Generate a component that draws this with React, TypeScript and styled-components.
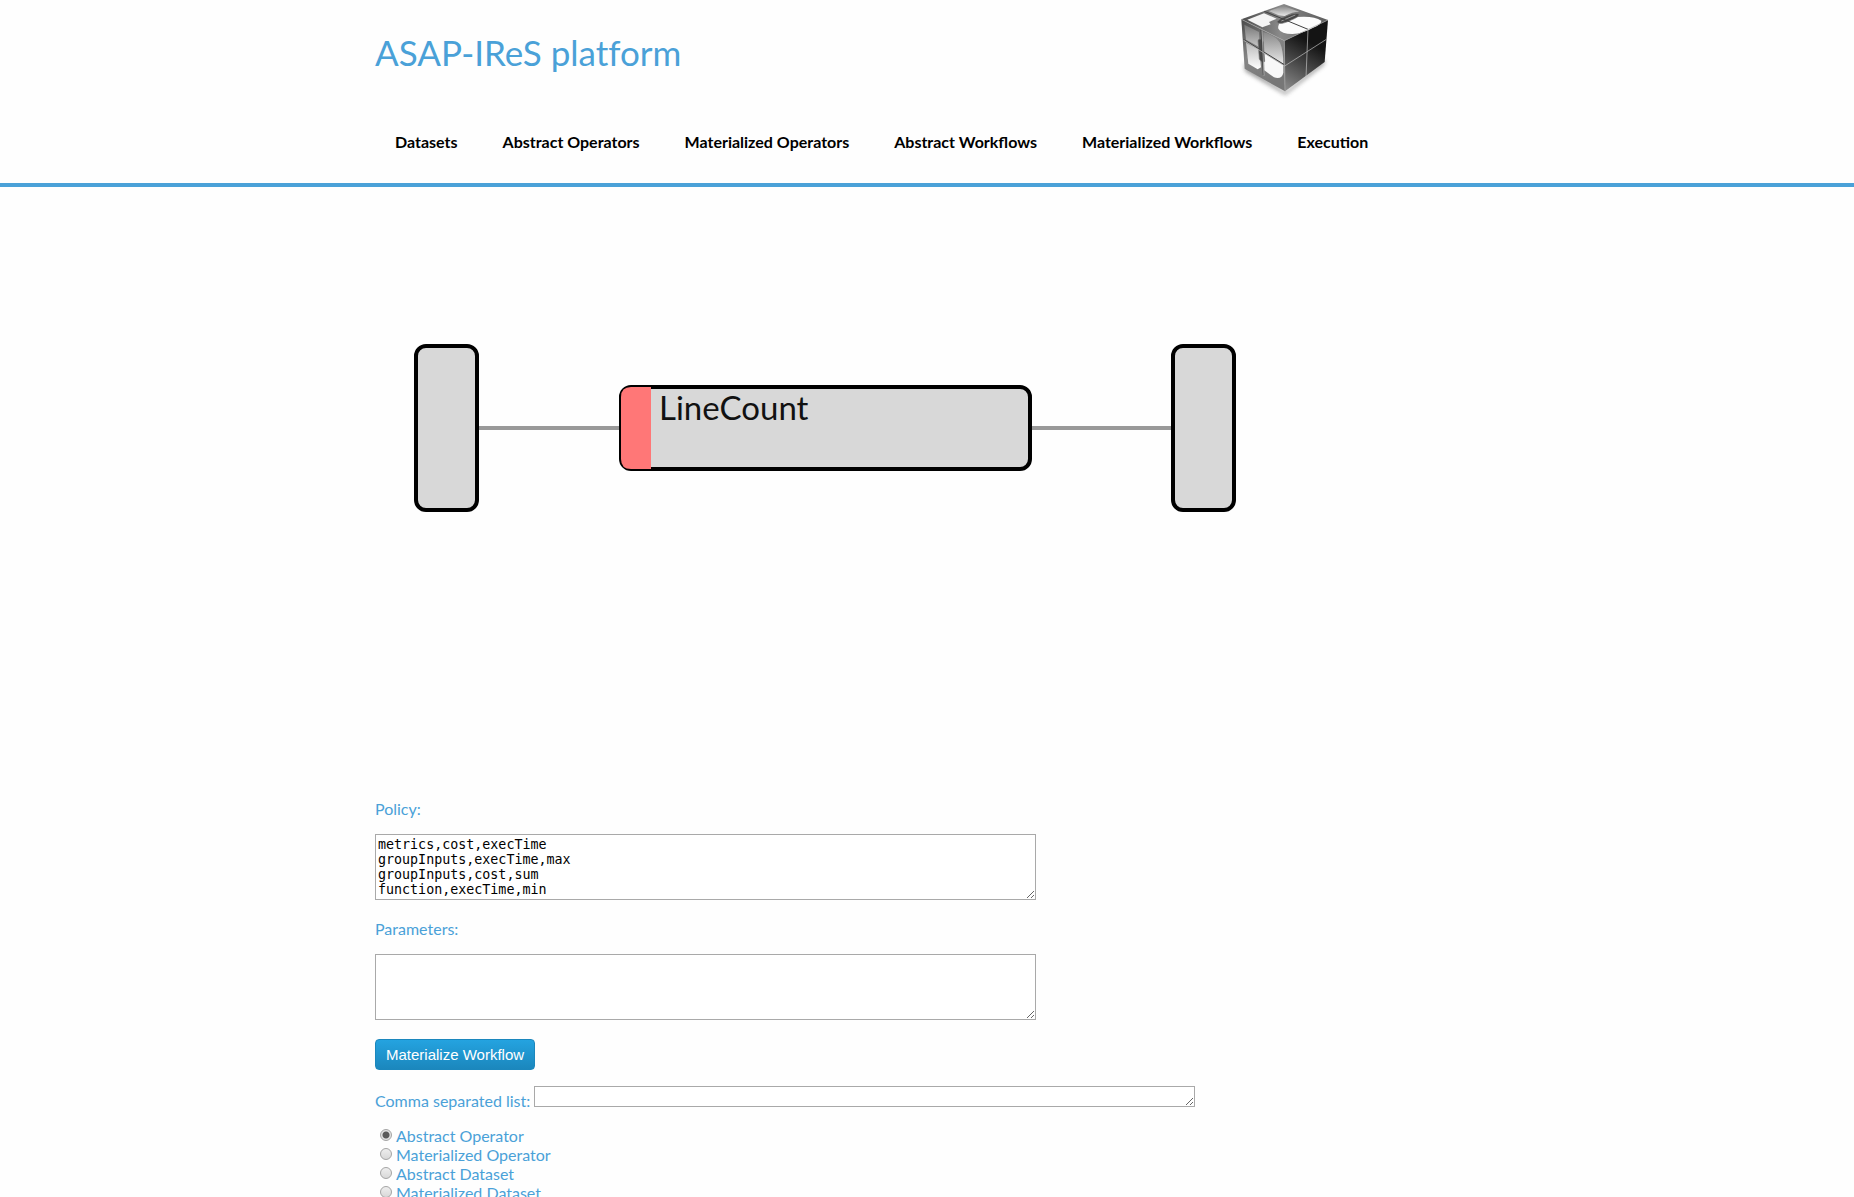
import React from "react";
import styled, { createGlobalStyle } from "styled-components";

const Global = createGlobalStyle`
  * { box-sizing: border-box; }
  body { margin: 0; background: #fefefe; color: #4aa1d8; font: 16px/19px Lato, sans-serif; }
`;

const Page = styled.div`height: 100vh; overflow: hidden auto; scrollbar-width: none;`;
const Header = styled.header`border-bottom: 4px solid #4aa1d8;`;
const Container = styled.div`width: min(1104px, 100% - 32px); margin: 0 auto;`;
const Brand = styled.div`
  display: flex; align-items: flex-start; justify-content: space-between;
  height: 106px; padding-right: 147px;
`;
const Title = styled.h1`
  margin: 31px 0 0; font-size: 35px; line-height: 42px; font-weight: 400; font-variant-ligatures: none;
`;
const Logo = styled.svg`display: block; width: 96px; height: 100px;`;
const Nav = styled.nav`display: flex; gap: 5px; padding-bottom: 21px;`;
const NavLink = styled.a`
  padding: 26px 20px 11px; color: #000; font-weight: 700; text-decoration: none; white-space: nowrap;
`;
const Diagram = styled.svg`
  display: block; width: 100%; height: 612px;
  text { font: 33px Lato, sans-serif; fill: #111; }
`;
const Form = styled.form`display: flex; flex-direction: column; align-items: flex-start;`;
const Field = styled.div`display: flex; flex-direction: column; gap: 16px; margin-bottom: 19px;`;
const TextArea = styled.textarea<{ $rows: number }>`
  width: 661px; max-width: 100%; height: ${(p) => p.$rows * 15 + 6}px;
  margin: 0; padding: 2px; border: 1px solid #a9a9a9; border-radius: 0; background: #fff; color: #000;
  font-family: "DejaVu Sans Mono", monospace; line-height: 15px; overflow: auto;
`;
const Submit = styled.button`
  height: 31px; padding: 0 10px; border: 1px solid #1b87bd; border-radius: 4px;
  background: linear-gradient(#24a3e0, #1b87bd); color: #fff; font: 15px "Liberation Sans", Arial, sans-serif;
`;
const Inline = styled.div`
  margin: 16px 0;
  textarea { vertical-align: baseline; }
`;
const Options = styled.div`display: flex; flex-direction: column;`;
const Option = styled.label`display: flex; align-items: flex-start; gap: 4px; height: 19px; padding-left: 5px;`;
const Radio = styled.input`
  appearance: none; width: 12px; height: 12px; margin: 3px 0 0; border: 1px solid #a4a4a4; border-radius: 50%;
  background: linear-gradient(#eee, #d8d8d8);
  &:checked { background: radial-gradient(circle, #5a5a5a 0 3px, #e2e2e2 4px); }
`;

const links = ["Datasets", "Abstract Operators", "Materialized Operators", "Abstract Workflows", "Materialized Workflows", "Execution"];
const kinds = ["Abstract Operator", "Materialized Operator", "Abstract Dataset", "Materialized Dataset"];
const policy = "metrics,cost,execTime\ngroupInputs,execTime,max\ngroupInputs,cost,sum\nfunction,execTime,min";

function CubeLogo() {
  return (
    <Logo viewBox="48 0 288 300" role="img" aria-label="Metal cube">
      <defs>
        <linearGradient id="top" x1="0" y1="0" x2="1" y2="0">
          <stop offset="0" stopColor="#4c4c4c" /><stop offset=".45" stopColor="#8a8a8a" /><stop offset="1" stopColor="#5c5c5c" />
        </linearGradient>
        <linearGradient id="left" x1="0" y1="0" x2=".4" y2="1">
          <stop offset="0" stopColor="#4a4a4a" /><stop offset=".5" stopColor="#858585" /><stop offset="1" stopColor="#777" />
        </linearGradient>
        <linearGradient id="right" x1="0" y1="1" x2=".35" y2="0">
          <stop offset="0" stopColor="#909090" /><stop offset=".45" stopColor="#484848" /><stop offset=".8" stopColor="#141414" />
        </linearGradient>
        <linearGradient id="panel" x1="0" y1="0" x2="0" y2="1">
          <stop offset="0" stopColor="#777" /><stop offset="1" stopColor="#c8c8c8" />
        </linearGradient>
        <linearGradient id="lower" x1="0" y1="0" x2="0" y2="1">
          <stop offset="0" stopColor="#bbb" /><stop offset="1" stopColor="#fff" />
        </linearGradient>
        <linearGradient id="band" x1="0" y1="0" x2="0" y2="1">
          <stop offset="0" stopColor="#888" /><stop offset="1" stopColor="#e8e8e8" />
        </linearGradient>
        <filter id="soft" x="-20%" y="-20%" width="140%" height="150%"><feGaussianBlur stdDeviation="6" /></filter>
      </defs>
      <path d="M72 190L196 276L316 176L312 194L196 284L76 214Z" fill="#777" opacity=".75" filter="url(#soft)" />
      <path d="M192 12L324 60L193 122L64 58Z" fill="url(#top)" />
      <path d="M64 58L193 122L195 274L74 206Z" fill="url(#left)" />
      <path d="M324 60L193 122L195 274L314 186Z" fill="url(#right)" />
      <path d="M82 59L132 40L170 56L147 66L152 73L127 82Z" fill="#f4f4f4" />
      <path d="M146 33L191 18L238 35Q216 35 194 48L176 46Z" fill="url(#band)" />
      <path d="M184 61L232 51Q282 47 304 62Q305 73 278 84Q249 101 217 102Q184 102 175 86Q172 78 184 61Z" fill="#fcfcfc" />
      <path d="M170 66Q180 54 204 46Q229 36 238 43Q239 50 212 61Q180 77 170 66Z" fill="#484848" stroke="#808080" strokeWidth="2" />
      <path d="M184 63L226 45" stroke="#999" strokeWidth="3" />
      <path d="M73 74L117 96L119 142L78 119Z" fill="url(#panel)" />
      <path d="M78 128L118 150L123 202L113 208L85 191Z" fill="url(#lower)" />
      <path d="M130 96Q165 106 180 128Q190 151 190 192L131 155Z" fill="url(#band)" />
      <path d="M132 160L190 196V218Q186 239 162 232L133 211Z" fill="#f8f8f8" />
      <path d="M114 121Q122 111 130 126L134 184Q127 193 118 177Z" fill="#484848" stroke="#777" strokeWidth="2" />
      <path d="M133 34L264 88M70 118L193 194M123 90L130 225" fill="none" stroke="#404040" strokeWidth="3" />
      <g fill="none" stroke="#c5c5c5" strokeWidth="2">
        <path d="M64 58L193 122L324 60M193 122L195 274" stroke="#a5a5a5" />
        <path d="M71 121L194 198L319 118M126 91L132 227M264 88L258 232" />
      </g>
    </Logo>
  );
}

export default function App() {
  return (
    <Page>
      <Global />
      <Header>
        <Container>
          <Brand>
            <Title>ASAP-IReS platform</Title>
            <CubeLogo />
          </Brand>
          <Nav>{links.map((l) => <NavLink href="#" key={l}>{l}</NavLink>)}</Nav>
        </Container>
      </Header>
      <Container as="main">
        <Diagram>
          <g stroke="#999" strokeWidth="4">
            <line x1="103" y1="241" x2="245" y2="241" />
            <line x1="655" y1="241" x2="797" y2="241" />
          </g>
          <g fill="#d8d8d8" stroke="#000" strokeWidth="4">
            <rect x="41" y="159" width="61" height="164" rx="10" />
            <rect x="798" y="159" width="61" height="164" rx="10" />
            <rect x="246" y="200" width="409" height="82" rx="10" />
          </g>
          <path d="M276 200H256Q246 200 246 210V272Q246 282 256 282H276Z" fill="#ff7777" />
          <text x="284" y="233">LineCount</text>
        </Diagram>
        <Form onSubmit={(e) => e.preventDefault()}>
          <Field>
            <label htmlFor="policy">Policy:</label>
            <TextArea id="policy" $rows={4} defaultValue={policy} spellCheck={false} />
          </Field>
          <Field>
            <label htmlFor="parameters">Parameters:</label>
            <TextArea id="parameters" $rows={4} />
          </Field>
          <Submit>Materialize Workflow</Submit>
          <Inline>
            <label htmlFor="list">Comma separated list:</label>{" "}
            <TextArea id="list" $rows={1} />
          </Inline>
          <Options>
            {kinds.map((k, i) => (
              <Option key={k}><Radio type="radio" name="kind" defaultChecked={i === 0} />{k}</Option>
            ))}
          </Options>
        </Form>
      </Container>
    </Page>
  );
}
